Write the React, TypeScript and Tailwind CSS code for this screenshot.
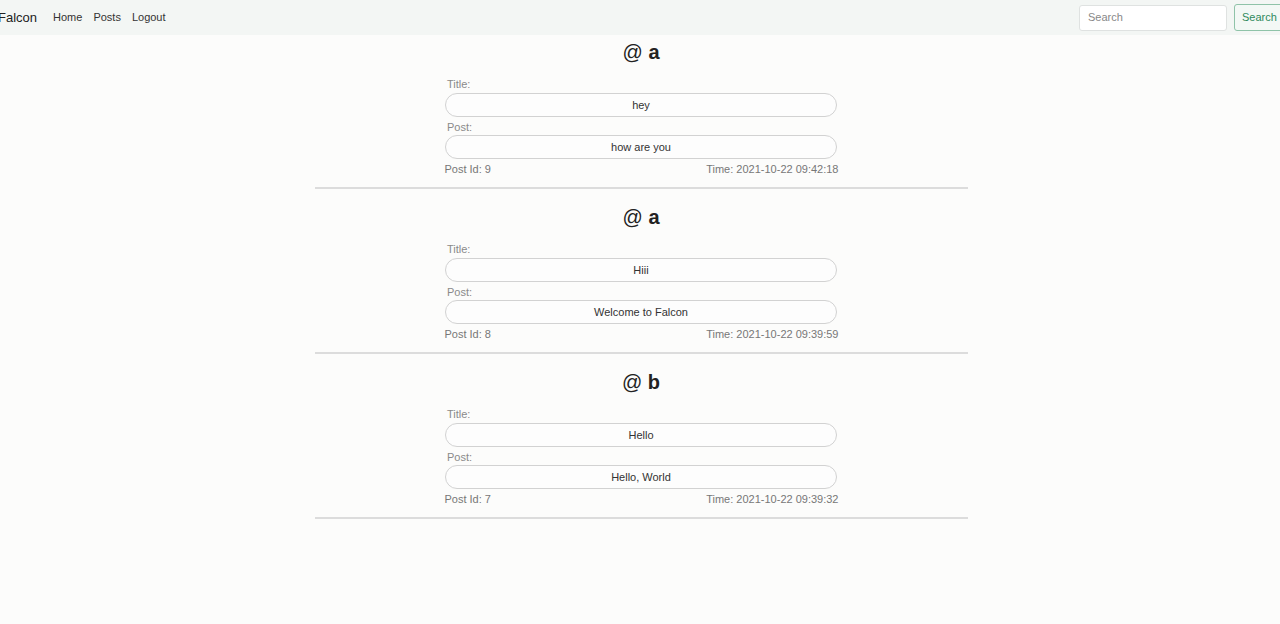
import React from "react";

const posts = [
  { user: "a", title: "hey", body: "how are you", id: 9, time: "2021-10-22 09:42:18" },
  { user: "a", title: "Hiii", body: "Welcome to Falcon", id: 8, time: "2021-10-22 09:39:59" },
  { user: "b", title: "Hello", body: "Hello, World", id: 7, time: "2021-10-22 09:39:32" },
];

export default function App() {
  return (
    <div
      className="min-h-[624px] w-[1280px] overflow-hidden bg-[#fcfcfb] text-[#222]"
      style={{ fontFamily: '"Liberation Sans", Arial, sans-serif' }}
    >
      <nav className="flex h-[35px] items-center bg-[#f3f6f4]">
        <div className="ml-[-2px] text-[13px] leading-none text-[#222]">Falcon</div>
        <div className="ml-[16px] flex gap-[11px] text-[11px] text-[#333]">
          <span>Home</span>
          <span>Posts</span>
          <span>Logout</span>
        </div>
        <div className="ml-auto mr-[-6px] flex items-center gap-[7px]">
          <div className="flex h-[26px] w-[148px] items-center rounded-[3px] border border-[#dfe2e1] bg-white pl-[8px] text-[11px] text-[#888]">
            Search
          </div>
          <div className="flex h-[27px] w-[52px] items-center rounded-[3px] border border-[#8fc3a8] bg-[#f3f8f5] pl-[7px] text-[11px] text-[#2f8a5d]">
            Search
          </div>
        </div>
      </nav>
      <div className="flex justify-center pl-[2px]">
        <main className="w-[653px] pt-[1px]">
          {posts.map((p, i) => (
            <div key={i} className="flex flex-col items-center">
              <div className="h-[32px] text-[20px] leading-[32px] text-[#222]">
                <span className="font-normal">@</span> <span className="font-bold">{p.user}</span>
              </div>
              <div className="mt-[9px] w-[392px] pl-[2px] text-[11px] leading-[14px] text-[#8a8a8a]">Title:</div>
              <div className="mt-[2px] flex h-[24px] w-[392px] items-center justify-center rounded-full border border-[#d2d2d2] bg-[#fdfdfd] text-[11px] text-[#333]">
                {p.title}
              </div>
              <div className="mt-[3px] w-[392px] pl-[2px] text-[11px] leading-[14px] text-[#8a8a8a]">Post:</div>
              <div className="mt-[1px] flex h-[24px] w-[392px] items-center justify-center rounded-full border border-[#d2d2d2] bg-[#fdfdfd] text-[11px] text-[#333]">
                {p.body}
              </div>
              <div className="mt-[3px] flex w-[395px] justify-between pl-[1px] text-[11px] leading-[14px] text-[#777]">
                <span>Post Id: {p.id}</span>
                <span>Time: {p.time}</span>
              </div>
              <div className="mt-[11px] h-[2px] w-full bg-[#dcdcdc]" />
              <div className="h-[12px]" />
            </div>
          ))}
        </main>
      </div>
    </div>
  );
}
